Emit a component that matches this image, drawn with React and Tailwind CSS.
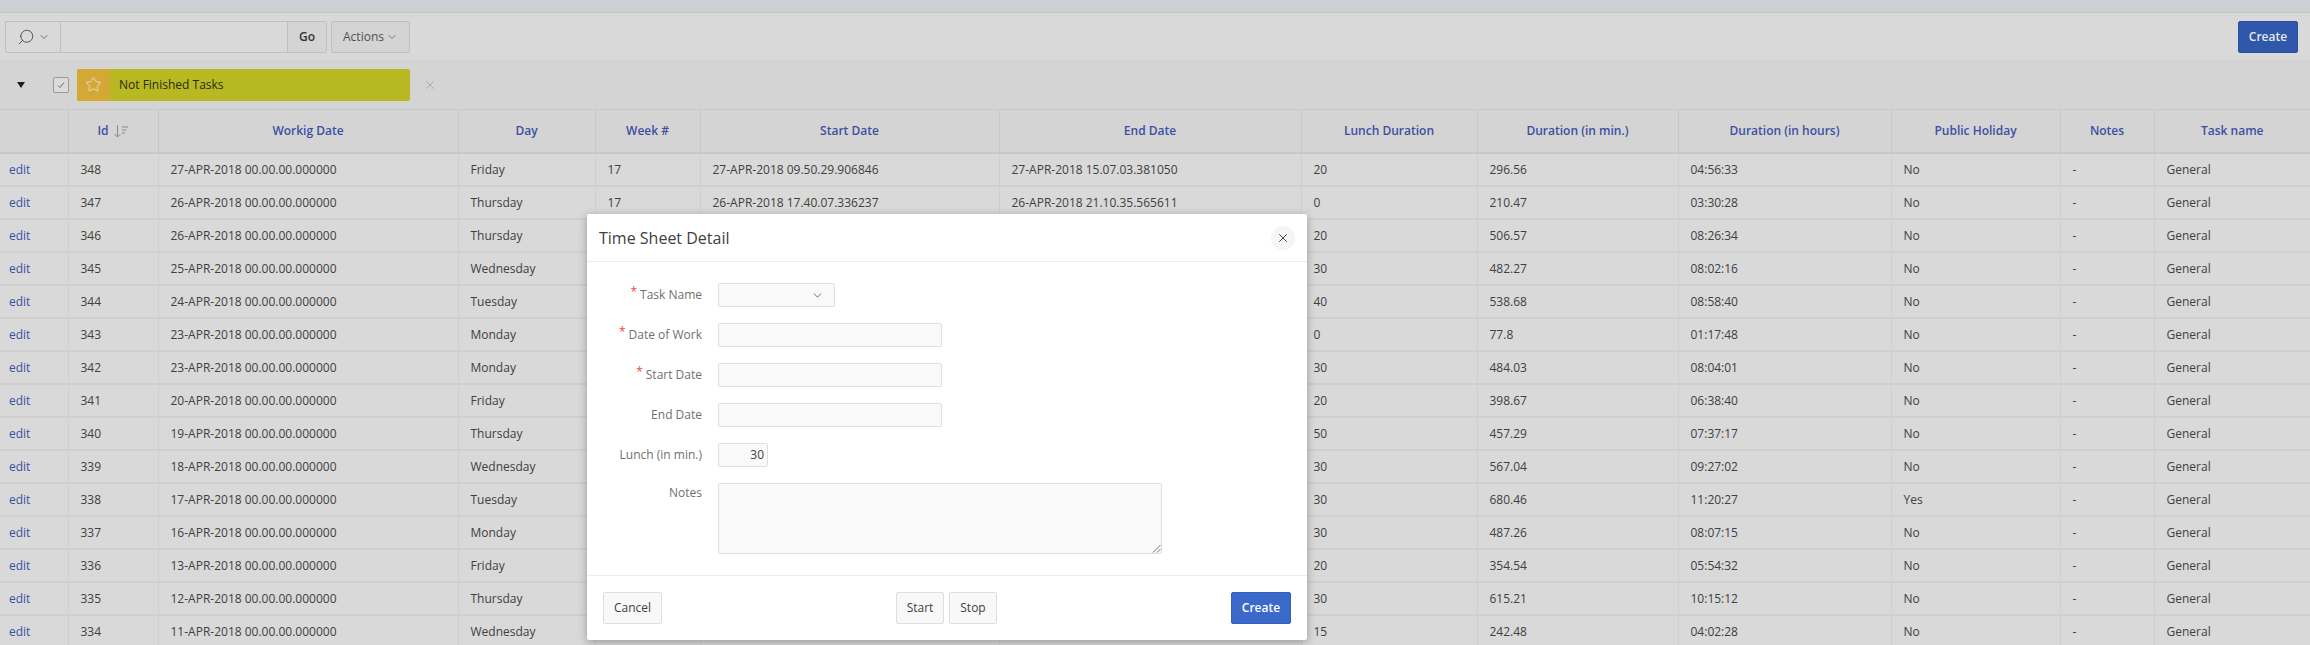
import React from 'react';
import { ChevronDown, Search, Star, X } from 'lucide-react';

const columns = [
  { label: '', width: 'w-[68px]' },
  { label: 'Id', width: 'w-[90px]' },
  { label: 'Workig Date', width: 'w-[300px]' },
  { label: 'Day', width: 'w-[137px]' },
  { label: 'Week #', width: 'w-[105px]' },
  { label: 'Start Date', width: 'w-[299px]' },
  { label: 'End Date', width: 'w-[302px]' },
  { label: 'Lunch Duration', width: 'w-[176px]' },
  { label: 'Duration (in min.)', width: 'w-[201px]' },
  { label: 'Duration (in hours)', width: 'w-[213px]' },
  { label: 'Public Holiday', width: 'w-[169px]' },
  { label: 'Notes', width: 'w-[94px]' },
  { label: 'Task name', width: 'w-[156px]' },
];

const rows = [
  ['348', '27-APR-2018 00.00.00.000000', 'Friday', '17', '27-APR-2018 09.50.29.906846', '27-APR-2018 15.07.03.381050', '20', '296.56', '04:56:33', 'No'],
  ['347', '26-APR-2018 00.00.00.000000', 'Thursday', '17', '26-APR-2018 17.40.07.336237', '26-APR-2018 21.10.35.565611', '0', '210.47', '03:30:28', 'No'],
  ['346', '26-APR-2018 00.00.00.000000', 'Thursday', '17', '', '', '20', '506.57', '08:26:34', 'No'],
  ['345', '25-APR-2018 00.00.00.000000', 'Wednesday', '17', '', '', '30', '482.27', '08:02:16', 'No'],
  ['344', '24-APR-2018 00.00.00.000000', 'Tuesday', '17', '', '', '40', '538.68', '08:58:40', 'No'],
  ['343', '23-APR-2018 00.00.00.000000', 'Monday', '17', '', '', '0', '77.8', '01:17:48', 'No'],
  ['342', '23-APR-2018 00.00.00.000000', 'Monday', '17', '', '', '30', '484.03', '08:04:01', 'No'],
  ['341', '20-APR-2018 00.00.00.000000', 'Friday', '16', '', '', '20', '398.67', '06:38:40', 'No'],
  ['340', '19-APR-2018 00.00.00.000000', 'Thursday', '16', '', '', '50', '457.29', '07:37:17', 'No'],
  ['339', '18-APR-2018 00.00.00.000000', 'Wednesday', '16', '', '', '30', '567.04', '09:27:02', 'No'],
  ['338', '17-APR-2018 00.00.00.000000', 'Tuesday', '16', '', '', '30', '680.46', '11:20:27', 'Yes'],
  ['337', '16-APR-2018 00.00.00.000000', 'Monday', '16', '', '', '30', '487.26', '08:07:15', 'No'],
  ['336', '13-APR-2018 00.00.00.000000', 'Friday', '15', '', '', '20', '354.54', '05:54:32', 'No'],
  ['335', '12-APR-2018 00.00.00.000000', 'Thursday', '15', '', '', '30', '615.21', '10:15:12', 'No'],
  ['334', '11-APR-2018 00.00.00.000000', 'Wednesday', '15', '', '', '15', '242.48', '04:02:28', 'No'],
];

const SortIcon = () => (
  <svg width="16" height="14" viewBox="0 0 16 14" fill="none" stroke="#8a8a8a" strokeWidth="1" className="ml-1">
    <path d="M4.5 1v12M1.5 10l3 3 3-3" />
    <path d="M9 3h6M9 6h4.5M9 9h3" />
  </svg>
);

const Field = ({ label, required, children, top }) => (
  <div className={`flex ${top ? 'items-start' : 'items-center'} gap-4`}>
    <label className={`flex w-[115px] justify-end text-xs text-[#707070] ${top ? 'pt-[2px]' : ''}`}>
      {required && <span className="mr-[3px] -mt-[3px] text-[#f04a4a]">*</span>}
      {label}
    </label>
    {children}
  </div>
);

const TextBox = () => <div className="h-6 w-[224px] rounded-[2px] border border-[#dfdfdf] bg-[#f9f9f9]" />;

const FooterButton = ({ children, className }) => (
  <button className={`h-8 rounded-[2px] border border-[#dfdfdf] bg-[#f8f8f8] text-xs text-[#404040] ${className}`}>
    {children}
  </button>
);

export default function App() {
  return (
    <div className="relative h-[645px] w-[2310px] overflow-hidden bg-[#d9d9d9] font-['Open_Sans',sans-serif] text-xs text-[#404040]">
      <div className="h-[13px] border-b border-[#c4c4c4] bg-[#ccd0d5]" />

      <div className="flex h-12 items-center border-b border-[#d0d0d0] bg-[#d9d9d9] pl-[5px] pr-3">
        <div className="flex h-8 w-[322px] items-stretch rounded-[2px] border border-[#bfbfbf]">
          <div className="flex w-[55px] items-center justify-center gap-[3px] border-r border-[#bfbfbf] text-[#404a55]">
            <Search size={18} strokeWidth={1.2} className="-scale-x-100 rotate-0" />
            <ChevronDown size={12} strokeWidth={1.4} />
          </div>
          <div className="flex-1" />
          <div className="flex w-[39px] items-center justify-center border-l border-[#bfbfbf] bg-[#d4d4d4] font-semibold text-[#333333]">Go</div>
        </div>
        <div className="ml-[4px] flex h-8 w-[79px] items-center justify-center gap-[2px] rounded-[2px] border border-[#bfbfbf] bg-[#d4d4d4] text-[#505050]">
          Actions
          <ChevronDown size={12} strokeWidth={1.4} />
        </div>
        <button className="ml-auto h-8 w-[60px] rounded-[2px] border border-[#2a4f9c] bg-[#2f57ab] font-semibold text-[#e8e8e8]">Create</button>
      </div>

      <div className="flex h-[49px] items-center border-b border-[#c8c8c8] bg-[#d4d4d4] pb-[1px]">
        <span className="ml-[17px] h-0 w-0 border-x-[4px] border-t-[6px] border-x-transparent border-t-[#1f1f1f]" />
        <span className="ml-[28px] flex h-4 w-4 items-center justify-center rounded-[2px] border border-[#9a9a9a] bg-[#dcdcdc]">
          <svg width="10" height="10" viewBox="0 0 10 10" fill="none" stroke="#6a6a6a" strokeWidth="1">
            <path d="M2 5.5l2 2 4-5" />
          </svg>
        </span>
        <div className="ml-2 flex h-8 w-[333px] items-stretch overflow-hidden rounded-[2px] bg-[#b8b822]">
          <div className="flex w-[33px] items-center justify-center bg-[#d4a835]">
            <Star size={17} strokeWidth={1.3} className="text-[#e6e1d0]" />
          </div>
          <div className="flex items-center pl-[9px] text-[#2b2b10]">Not Finished Tasks</div>
        </div>
        <X size={14} strokeWidth={1.2} className="ml-[13px] text-[#9a9a9a]" />
      </div>

      <table className="w-[2310px] table-fixed border-collapse">
        <colgroup>
          {columns.map((col, i) => (
            <col key={i} className={col.width} />
          ))}
        </colgroup>
        <thead>
          <tr className="h-[43px] bg-[#d4d4d4]">
            {columns.map((col, i) => (
              <th key={i} className="border-x border-b-2 border-[#c8c8c8] p-0 font-semibold text-[#3b50a3] first:border-l-0 last:border-r-0">
                <span className="inline-flex items-center">
                  {col.label}
                  {col.label === 'Id' && <SortIcon />}
                </span>
              </th>
            ))}
          </tr>
        </thead>
        <tbody>
          {rows.map((row) => (
            <tr key={row[0]} className="h-[33px] border-b-2 border-[#cfcfcf]">
              <td className="border-r border-[#cfcfcf] pl-[9px] text-[#3b50a3]">edit</td>
              {row.map((cell, i) => (
                <td key={i} className="border-r border-[#cfcfcf] px-3 whitespace-nowrap">{cell}</td>
              ))}
              <td className="border-r border-[#cfcfcf] px-3">-</td>
              <td className="px-3">General</td>
            </tr>
          ))}
        </tbody>
      </table>

      <div className="absolute left-[587px] top-[214px] flex h-[426px] w-[720px] flex-col rounded-[2px] bg-white shadow-[0_2px_8px_rgba(0,0,0,0.3)]">
        <div className="flex h-[48px] items-center justify-between border-b border-[#ececec] pl-3 pr-3">
          <h2 className="text-base font-normal text-[#404040]">Time Sheet Detail</h2>
          <button className="flex h-6 w-6 items-center justify-center rounded-full bg-[#f5f5f5] text-[#404040]">
            <X size={14} strokeWidth={1.6} />
          </button>
        </div>

        <div className="flex flex-1 flex-col gap-4 pt-[21px]">
          <Field label="Task Name" required>
            <div className="flex h-6 w-[117px] items-center justify-end rounded-[2px] border border-[#dfdfdf] bg-[#f9f9f9] pr-[10px] text-[#404040]">
              <ChevronDown size={13} strokeWidth={1.4} />
            </div>
          </Field>
          <Field label="Date of Work" required><TextBox /></Field>
          <Field label="Start Date" required><TextBox /></Field>
          <Field label="End Date"><TextBox /></Field>
          <Field label="Lunch (in min.)">
            <div className="flex h-6 w-[50px] items-center justify-end rounded-[2px] border border-[#dfdfdf] bg-[#f9f9f9] pr-[3px]">30</div>
          </Field>
          <Field label="Notes" top>
            <div className="relative h-[71px] w-[444px] rounded-[2px] border border-[#dfdfdf] bg-[#f9f9f9]">
              <svg width="9" height="9" viewBox="0 0 9 9" fill="none" stroke="#555555" strokeWidth="0.8" className="absolute bottom-0 right-0">
                <path d="M1 8.5L8.5 1M5 8.5L8.5 5" />
              </svg>
            </div>
          </Field>
        </div>

        <div className="flex h-[65px] items-start justify-between border-t border-[#ececec] px-4 pt-4">
          <FooterButton className="w-[59px]">Cancel</FooterButton>
          <div className="flex gap-[5px]">
            <FooterButton className="w-12">Start</FooterButton>
            <FooterButton className="w-12">Stop</FooterButton>
          </div>
          <button className="h-8 w-[60px] rounded-[2px] border border-[#3460bd] bg-[#3a69c9] text-xs font-semibold text-white">Create</button>
        </div>
      </div>
    </div>
  );
}
